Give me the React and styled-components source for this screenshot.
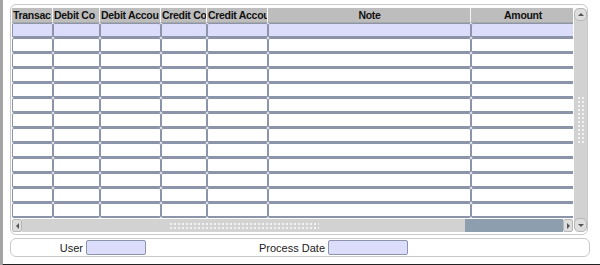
import styled, { createGlobalStyle } from 'styled-components';

const GlobalStyle = createGlobalStyle`
  html, body {
    margin: 0;
    padding: 0;
    background: #fff;
    font-family: "Liberation Sans", Arial, sans-serif;
  }
`;

const columns = [
  { title: 'Transac', width: 41, align: 'left' },
  { title: 'Debit Co', width: 47, align: 'left' },
  { title: 'Debit Accou', width: 61, align: 'left' },
  { title: 'Credit Co', width: 46, align: 'left' },
  { title: 'Credit Accou', width: 61, align: 'left' },
  { title: 'Note', width: 203, align: 'center' },
  { title: 'Amount', width: 104, align: 'center' },
];

const ROWS = 13;

const Frame = styled.div`
  width: 594px;
  height: 260px;
  padding: 4px 0 0 7px;
  border-left: 3px solid #a4a4a4;
  border-bottom: 2px solid #222;
  border-bottom-right-radius: 3px;
  display: flex;
  flex-direction: column;
  gap: 3px;
`;

const Panel = styled.div`
  width: 578px;
  border: 1px solid #c9c9c9;
  border-radius: 6px;
  background: #fff;
`;

const TablePanel = styled(Panel)`
  height: 231px;
  padding: 3px 0 2px 1px;
  box-sizing: border-box;
  display: flex;
  flex-shrink: 0;
`;

const GridArea = styled.div`
  width: 562px;
  display: flex;
  flex-direction: column;
  overflow: hidden;
`;

const Row = styled.div`
  display: flex;
  height: ${(p) => p.$h}px;
  flex-shrink: 0;
`;

const HeadCell = styled.div`
  width: ${(p) => p.$w}px;
  flex-shrink: 0;
  box-sizing: border-box;
  background: #bdbdbd;
  border-right: 1px solid #f4f4f4;
  border-bottom: 1px solid #a9a9a9;
  font-size: 10.5px;
  font-weight: bold;
  letter-spacing: -0.3px;
  color: #111;
  line-height: 14px;
  padding-left: 1px;
  text-align: ${(p) => p.$align};
  white-space: nowrap;
  overflow: hidden;
`;

const Cell = styled.div`
  width: ${(p) => p.$w}px;
  flex-shrink: 0;
  box-sizing: border-box;
  background: ${(p) => (p.$active ? '#dcdcfb' : '#fff')};
  border: 1px solid #8b94a8;
  border-bottom: 2px solid #8b94a8;
  border-radius: 2px;
`;

const HScroll = styled.div`
  display: flex;
  height: 13px;
  margin-top: 1px;
  flex-shrink: 0;
`;

const ArrowBtn = styled.div`
  width: ${(p) => p.$w || 10}px;
  height: ${(p) => p.$h || 13}px;
  box-sizing: border-box;
  background: #dedede;
  border: 1px solid #b8b8b8;
  border-radius: ${(p) => p.$r || 2}px;
  display: flex;
  align-items: center;
  justify-content: center;
  flex-shrink: 0;
`;

const Thumb = styled.div`
  width: ${(p) => p.$w}px;
  background: #d2d2d2;
  display: flex;
  align-items: center;
  justify-content: center;
  flex-shrink: 0;
`;

const Track = styled.div`
  flex: 1;
  background: #8d9eae;
`;

const Grip = styled.div`
  width: ${(p) => p.$w}px;
  height: ${(p) => p.$h}px;
  background-image: radial-gradient(circle, #f2f2f2 0.9px, transparent 1.2px);
  background-size: 4px 4px;
`;

const VScroll = styled.div`
  width: 13px;
  margin-left: 1px;
  display: flex;
  flex-direction: column;
  background: #d2d2d2;
  border-radius: 5px;
`;

const VThumb = styled.div`
  flex: 1;
  display: flex;
  align-items: center;
  justify-content: center;
`;

const Tri = styled.div`
  width: 0;
  height: 0;
  border: 3px solid transparent;
  ${(p) => p.$dir === 'up' && 'border-bottom: 3px solid #555; margin-top: -3px;'}
  ${(p) => p.$dir === 'down' && 'border-top: 3px solid #555; margin-bottom: -3px;'}
  ${(p) => p.$dir === 'left' && 'border-right: 3px solid #555; margin-left: -3px;'}
  ${(p) => p.$dir === 'right' && 'border-left: 3px solid #555; margin-right: -3px;'}
`;

const FormPanel = styled(Panel)`
  height: 17px;
  display: flex;
  align-items: center;
  font-size: 11px;
  color: #222;
  flex-shrink: 0;
`;

const Label = styled.span`
  width: ${(p) => p.$w}px;
  text-align: right;
  padding-right: 3px;
  flex-shrink: 0;
`;

const Field = styled.div`
  width: ${(p) => p.$w}px;
  height: 15px;
  box-sizing: border-box;
  background: #dcdcfb;
  border: 1px solid #8b94a8;
  border-radius: 2px;
  flex-shrink: 0;
`;

const App = () => {
  return (
    <>
      <GlobalStyle />
      <Frame>
        <TablePanel>
          <GridArea>
            <Row $h={15}>
              {columns.map((c) => (
                <HeadCell key={c.title} $w={c.width} $align={c.align}>
                  {c.title}
                </HeadCell>
              ))}
            </Row>
            {Array.from({ length: ROWS }).map((_, r) => (
              <Row key={r} $h={15}>
                {columns.map((c) => (
                  <Cell key={c.title} $w={c.width} $active={r === 0} />
                ))}
              </Row>
            ))}
            <HScroll>
              <ArrowBtn>
                <Tri $dir="left" />
              </ArrowBtn>
              <Thumb $w={443}>
                <Grip $w={150} $h={8} />
              </Thumb>
              <Track />
              <ArrowBtn>
                <Tri $dir="right" />
              </ArrowBtn>
            </HScroll>
          </GridArea>
          <VScroll>
            <ArrowBtn $w={13} $h={13} $r={5}>
              <Tri $dir="up" />
            </ArrowBtn>
            <VThumb>
              <Grip $w={8} $h={48} />
            </VThumb>
            <ArrowBtn $w={13} $h={14} $r={5}>
              <Tri $dir="down" />
            </ArrowBtn>
          </VScroll>
        </TablePanel>
        <FormPanel>
          <Label $w={72}>User</Label>
          <Field $w={60} />
          <Label $w={179}>Process Date</Label>
          <Field $w={80} />
        </FormPanel>
      </Frame>
    </>
  );
};

export default App;
